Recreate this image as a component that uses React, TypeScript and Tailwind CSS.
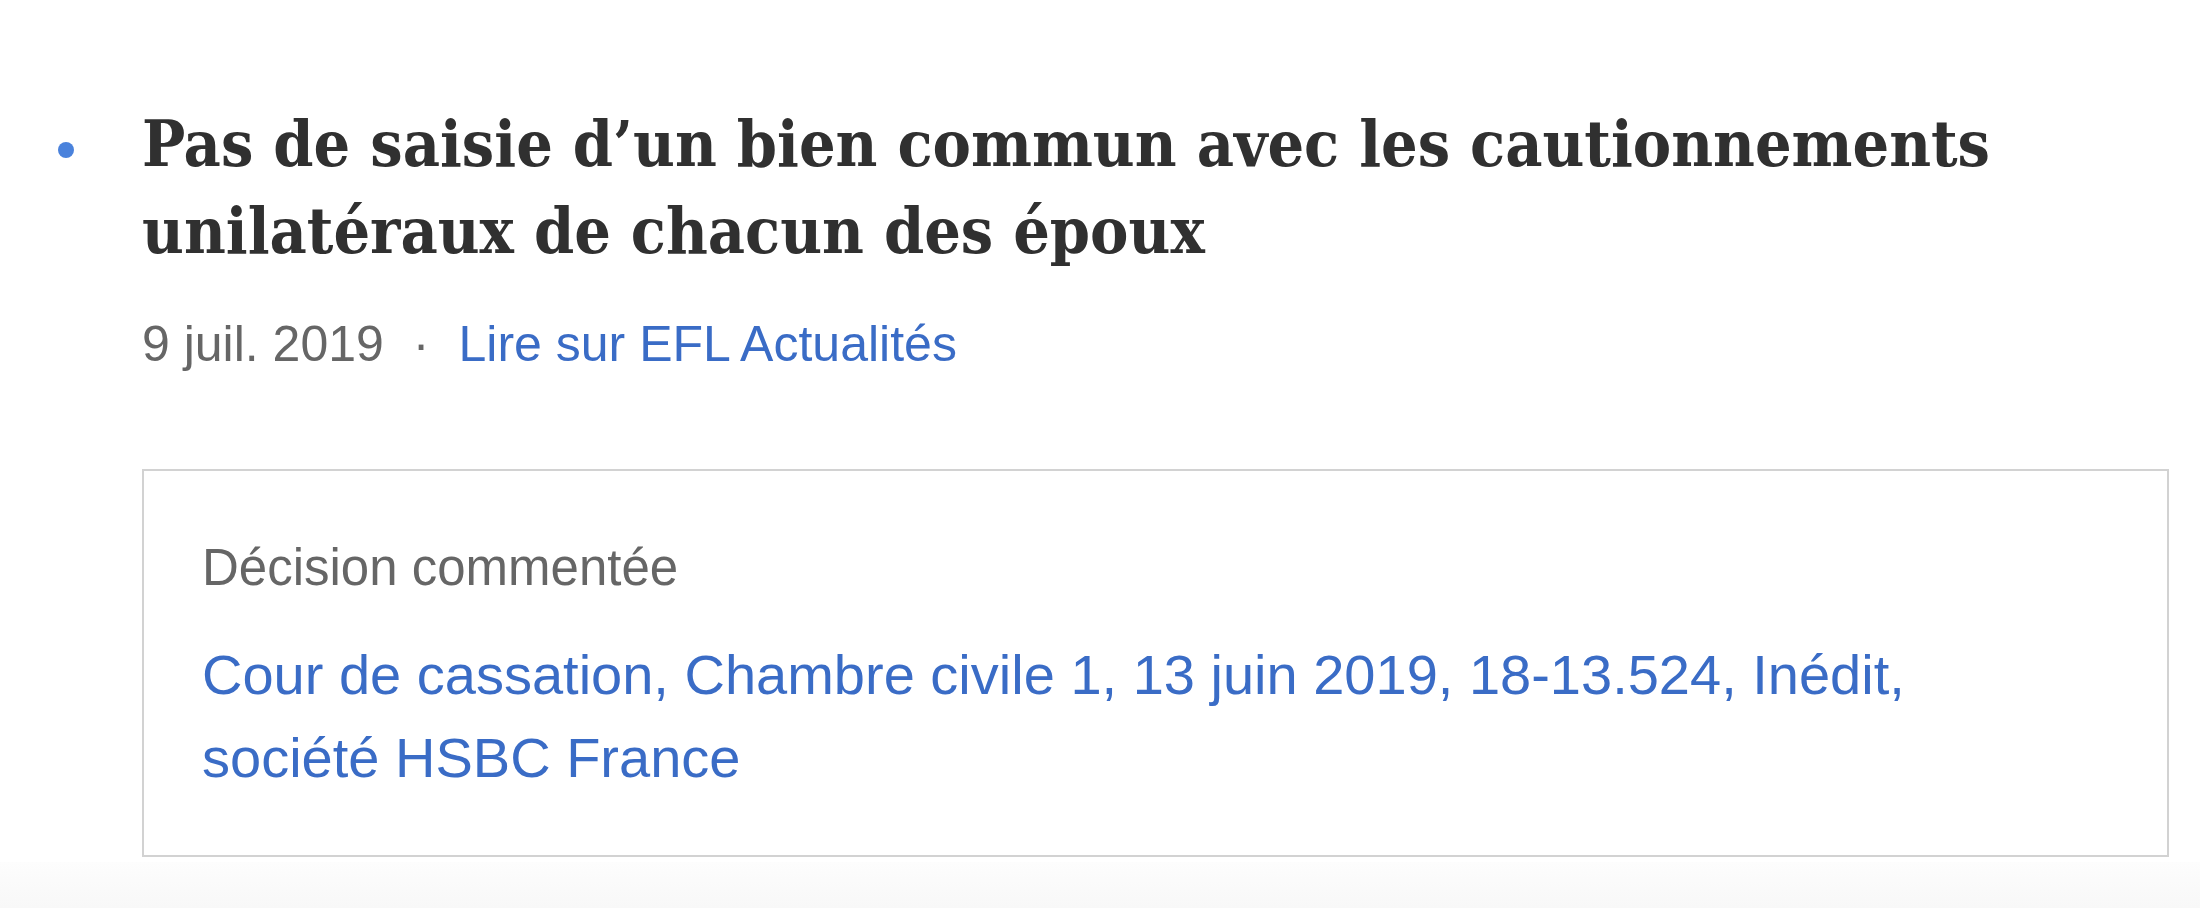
export default function App() {
  return (
    <div className="flex h-[908px] w-full flex-col bg-white">
      <div className="flex-1 pl-[58px] pr-[31px] pt-[100px]">
        <ul className="m-0 list-none p-0">
          <li className="flex">
            <span className="mt-[42px] h-[16px] w-[16px] shrink-0 rounded-full bg-[#4a82dc]" />
            <div className="ml-[68px] flex-1">
              <h2
                className="m-0 text-[64px] font-bold font-stretch-condensed leading-[87px] text-[#303030]"
                style={{ fontFamily: '"DejaVu Serif Condensed", "DejaVu Serif", Georgia, serif' }}
              >
                Pas de saisie d’un bien commun avec les cautionnements unilatéraux de chacun des époux
              </h2>
              <div
                className="mt-[33px] text-[50px] leading-[75px] text-[#666666]"
                style={{ fontFamily: '"Liberation Sans", Arial, sans-serif' }}
              >
                <span>9 juil. 2019</span>
                <span className="mx-[29px]">·</span>
                <a className="text-[#3a6cc6]">Lire sur EFL Actualités</a>
              </div>
              <div
                className="mt-[87px] border-2 border-[#d2d2d2] pb-[56px] pl-[58px] pr-[40px] pt-[55px]"
                style={{ fontFamily: '"Liberation Sans", Arial, sans-serif' }}
              >
                <div className="text-[51px] leading-[84px] text-[#666666]">Décision commentée</div>
                <a className="mt-[23px] block text-[56px] leading-[83px] text-[#3a6cc6]">
                  Cour de cassation, Chambre civile 1, 13 juin 2019, 18-13.524, Inédit,
                  <br />
                  société HSBC France
                </a>
              </div>
            </div>
          </li>
        </ul>
      </div>
      <div className="h-[46px] bg-gradient-to-b from-[#fdfdfd] to-[#f8f8f8]" />
    </div>
  );
}
